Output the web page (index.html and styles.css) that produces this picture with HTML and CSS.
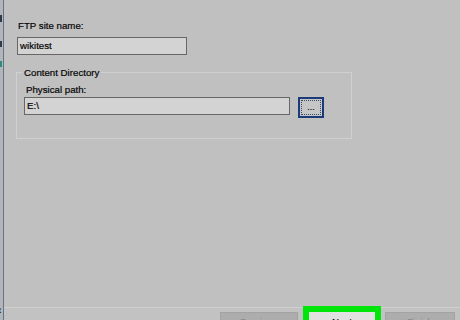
FILE: index.html
```html
<!DOCTYPE html>
<html>
<head>
<meta charset="utf-8">
<link rel="stylesheet" href="styles.css">
</head>
<body>
<div class="window">
  <div class="strip">
    <span class="bit bit-i"></span>
    <span class="bit bit-n"></span>
    <span class="bit bit-icon"></span>
    <span class="strip-fill"></span>
    <span class="bit-arrow">‹</span>
  </div>
  <div class="main">
    <div class="content">
      <div class="label">FTP site name:</div>
      <div class="field field-name">wikitest</div>
      <fieldset class="group">
        <legend class="legend">Content Directory</legend>
        <div class="label label-path">Physical path:</div>
        <div class="path-row">
          <div class="field field-path">E:\</div>
          <div class="browse"><span class="browse-inner">...</span></div>
        </div>
      </fieldset>
    </div>
    <div class="footer">
      <div class="btn btn-disabled btn-prev">Previous</div>
      <div class="btn btn-next">Next</div>
      <div class="btn btn-disabled btn-finish">Finish</div>
    </div>
  </div>
</div>
</body>
</html>
```
FILE: styles.css
```css
html, body {
  margin: 0;
  padding: 0;
}
body {
  width: 460px;
  height: 320px;
  overflow: hidden;
  background: #c0c0c0;
  font-family: "Liberation Sans", Arial, sans-serif;
  font-size: 9.7px;
  color: #050505;
  -webkit-text-stroke: 0.2px #050505;
}
.window {
  display: flex;
  width: 460px;
  height: 320px;
}
.strip {
  width: 3px;
  background: #b5b5b5;
  border-right: 1px solid #5a7696;
  display: flex;
  flex-direction: column;
  align-items: flex-start;
}
.bit {
  display: block;
  background: #333a44;
}
.bit-i {
  width: 2px;
  height: 7px;
  margin-top: 15px;
}
.bit-n {
  width: 2px;
  height: 6px;
  margin-top: 19px;
}
.bit-icon {
  width: 2px;
  height: 6px;
  margin-top: 14px;
  background: #2f8a7a;
}
.strip-fill {
  flex: 1;
}
.bit-arrow {
  font-size: 10px;
  line-height: 10px;
  margin-left: -2px;
  margin-bottom: 4px;
  color: #222;
}
.main {
  flex: 1;
  display: flex;
  flex-direction: column;
}
.content {
  flex: 1;
  padding: 19px 0 0 12px;
}
.label {
  line-height: 14px;
  height: 14px;
  margin-left: 2px;
  margin-bottom: 4px;
}
.field {
  box-sizing: border-box;
  height: 18px;
  background: #d3d3d3;
  border: 1px solid #676767;
  line-height: 16px;
  padding-left: 2px;
}
.field-name {
  width: 170px;
  margin-left: 1px;
}
.group {
  margin: 11px 0 0 0;
  width: 336px;
  box-sizing: border-box;
  border: 1px solid #d0d0d0;
  padding: 4px 0 20px 7px;
  min-width: 0;
}
.legend {
  padding: 0 2px;
  margin-left: -2px;
  line-height: 13px;
}
.label-path {
  margin-bottom: 0;
}
.path-row {
  display: flex;
  align-items: flex-start;
  gap: 8px;
}
.field-path {
  width: 266px;
}
.browse {
  box-sizing: border-box;
  width: 26px;
  height: 21px;
  border: 2px solid #1d3a78;
  background: #c6c6c6;
  display: flex;
  padding: 1px;
}
.browse-inner {
  flex: 1;
  border: 1px dotted #3a4a6a;
  text-align: center;
  line-height: 13px;
  font-size: 9px;
}
.footer {
  height: 13px;
  border-top: 1px solid #cfcfcf;
  background: #c2c2c2;
  display: flex;
  align-items: flex-start;
  padding: 4px 0 0 216px;
  box-sizing: border-box;
}
.btn {
  box-sizing: border-box;
  height: 22px;
  padding-top: 2px;
  text-align: center;
  line-height: 13px;
  flex: none;
}
.btn-disabled {
  background: #adadad;
  border: 1px solid #a3a3a3;
  color: #8a8a8a;
  -webkit-text-stroke: 0;
}
.btn-prev {
  width: 78px;
}
.btn-next {
  width: 66px;
  margin-left: 11px;
  background: #e1e1e1;
  outline: 6px solid #00e60a;
  padding-top: 3px;
}
.btn-finish {
  width: 70px;
  margin-left: 10px;
}
```
